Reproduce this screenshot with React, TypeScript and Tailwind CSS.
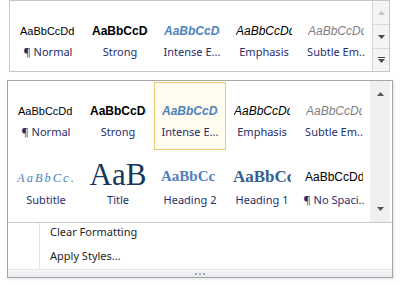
import React from 'react';

type Style = { preview: string; label: string; cls: string };

const ui = { fontFamily: '"Noto Sans", "Open Sans", sans-serif' };
const sans = { fontFamily: '"Liberation Sans", Arial, sans-serif' };
const serif = { fontFamily: '"Liberation Serif", "Times New Roman", serif' };

const row1: Style[] = [
  { preview: 'AaBbCcDd', label: '¶ Normal', cls: 'text-[11px] text-black' },
  { preview: 'AaBbCcDd', label: 'Strong', cls: 'text-[12px] font-bold text-black' },
  { preview: 'AaBbCcDd', label: 'Intense E...', cls: 'text-[12px] font-bold italic text-[#4f81bd]' },
  { preview: 'AaBbCcDd', label: 'Emphasis', cls: 'text-[12px] italic text-black' },
  { preview: 'AaBbCcDd', label: 'Subtle Em..', cls: 'text-[12px] italic text-[#7f7f7f]' },
];

function Arrow({ up, color = '#4a4a4a' }: { up?: boolean; color?: string }) {
  return (
    <svg width="7" height="4" viewBox="0 0 7 4">
      <path d={up ? 'M0 4 L3.5 0 L7 4 Z' : 'M0 0 L7 0 L3.5 4 Z'} fill={color} />
    </svg>
  );
}

function Cell({ s, selected, top }: { s: Style; selected?: boolean; top?: boolean }) {
  return (
    <div
      className={`flex h-[68px] w-[72px] shrink-0 flex-col items-center border ${
        selected ? 'border-[#e8c873] bg-[#fffcef]' : 'border-transparent'
      } ${top ? 'pt-[18px]' : 'pt-[17px]'}`}
    >
      <div className="h-[20px] w-[56px] overflow-hidden whitespace-nowrap leading-[20px]" style={sans}>
        <span className={s.cls}>{s.preview}</span>
      </div>
      <div className="mt-[5px] h-[14px] whitespace-nowrap text-[11px] leading-[14px] text-[#1f2d6b]" style={ui}>
        {s.label}
      </div>
    </div>
  );
}

function Row2() {
  const label = 'mt-[6px] h-[14px] whitespace-nowrap text-[11px] leading-[14px] text-[#1f2d6b]';
  const cell = 'flex h-[68px] w-[72px] shrink-0 flex-col items-center border border-transparent pt-[12px]';
  const box = 'flex h-[24px] w-[58px] items-end overflow-hidden whitespace-nowrap';
  return (
    <div className="flex">
      <div className={cell}>
        <div className={box} style={serif}>
          <span className="pb-[3px] text-[12.5px] italic leading-none tracking-[2px] text-[#4f81bd]">AaBbCc.</span>
        </div>
        <div className={label} style={ui}>Subtitle</div>
      </div>
      <div className={cell}>
        <div className={`${box} justify-center`} style={serif}>
          <span className="-mb-[3px] text-[31px] leading-none text-[#17365d]">AaB</span>
        </div>
        <div className={label} style={ui}>Title</div>
      </div>
      <div className={cell}>
        <div className={box} style={serif}>
          <span className="pb-[3px] text-[15px] font-bold leading-none text-[#4f81bd]">AaBbCc</span>
        </div>
        <div className={label} style={ui}>Heading 2</div>
      </div>
      <div className={cell}>
        <div className={box} style={serif}>
          <span className="pb-[2px] text-[17px] font-bold leading-none text-[#365f91]">AaBbCc</span>
        </div>
        <div className={label} style={ui}>Heading 1</div>
      </div>
      <div className={cell}>
        <div className={box} style={sans}>
          <span className="pb-[4px] text-[12px] leading-none text-black">AaBbCcDd</span>
        </div>
        <div className={label} style={ui}>¶ No Spaci..</div>
      </div>
    </div>
  );
}

export default function App() {
  return (
    <div className="h-[286px] w-[401px] overflow-hidden bg-white">
      {/* Ribbon quick styles gallery */}
      <div className="ml-[9px] flex h-[72px] w-[381px] border border-[#c6c6c6] bg-white">
        <div className="flex flex-1 pl-[2px]">
          {row1.map((s) => (
            <Cell key={s.label} s={s} top />
          ))}
        </div>
        <div className="flex w-[17px] flex-col border-l border-[#d4d4d4] bg-[#f4f4f4]">
          <div className="flex h-[24px] items-center justify-center border-b border-[#dadada]">
            <Arrow up color="#c4c4c4" />
          </div>
          <div className="flex h-[24px] items-center justify-center border-b border-[#dadada]">
            <Arrow />
          </div>
          <div className="flex flex-1 flex-col items-center justify-center gap-[1px]">
            <div className="h-[1px] w-[7px] bg-[#4a4a4a]" />
            <Arrow />
          </div>
        </div>
      </div>

      {/* Expanded dropdown */}
      <div className="ml-[7px] mt-[8px] flex w-[386px] flex-col border border-[#a5a5a5] bg-white shadow-[1px_1px_2px_rgba(0,0,0,0.12)]">
        <div className="flex h-[141px]">
          <div className="flex flex-1 flex-col pl-[2px] pt-[1px]">
            <div className="flex">
              {row1.map((s, i) => (
                <Cell key={s.label} s={s} selected={i === 2} />
              ))}
            </div>
            <Row2 />
          </div>
          <div className="mr-[2px] flex w-[20px] flex-col items-center justify-between bg-[#efefef] pb-[11px] pt-[11px]">
            <Arrow up color="#555" />
            <Arrow color="#555" />
          </div>
        </div>
        <div className="flex border-t border-[#c9c9c9]">
          <div className="w-[32px] border-r border-[#e2e2e2]" />
          <div className="flex-1 text-[11px] leading-[14px] text-[#1e1e1e]" style={ui}>
            <div className="h-[25px] pl-[10px] pt-[2px]">Clear Formatting</div>
            <div className="h-[21px] pl-[10px] pt-[1px]">Apply Styles...</div>
          </div>
        </div>
        <div className="flex h-[8px] items-center justify-center gap-[2px] border-t border-[#e4e7eb] bg-gradient-to-b from-[#f7f8fa] to-[#e6e9ee]">
          <div className="h-[2px] w-[2px] bg-[#a0a8b4]" />
          <div className="h-[2px] w-[2px] bg-[#a0a8b4]" />
          <div className="h-[2px] w-[2px] bg-[#a0a8b4]" />
        </div>
      </div>
    </div>
  );
}
